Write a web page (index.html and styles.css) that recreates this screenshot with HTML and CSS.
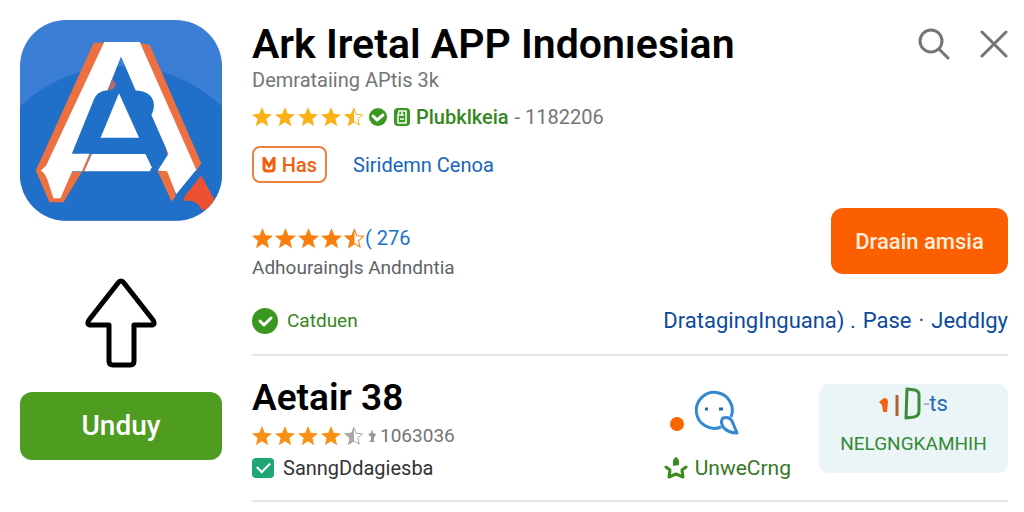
FILE: index.html
```html
<!DOCTYPE html>
<html lang="id">
<head>
<meta charset="UTF-8">
<meta name="viewport" content="width=device-width, initial-scale=1.0">
<title>Ark Iretal APP Indonıesian</title>
<link rel="stylesheet" href="styles.css">
</head>
<body>
<svg class="defs" width="0" height="0" aria-hidden="true">
<symbol id="star" viewBox="0 0 20 20">
<path d="M10 0l2.7 6.8 7.3.6-5.600 4.700L16.200 19.200 10 15.300 3.800 19.200l1.800-7.100L0 7.400l7.300-.6z"/>
</symbol>
<symbol id="star-half" viewBox="0 0 20 20">
<path d="M10 1.500l2.300 5.900 6.300.5-4.800 4.100 1.500 6.100L10 14.800l-5.300 3.300L6.200 12 1.400 7.900l6.300-.5z" fill="none" stroke="currentColor" stroke-width="1"/>
<path d="M10 0v15.300l-6.200 3.900 1.800-7.100L0 7.400l7.300-.6z"/>
</symbol>
</svg>
<div class="page">
<aside class="side">
<svg class="app-icon" viewBox="30 32 604 600" role="img" aria-label="Ark">
<defs>
<clipPath id="tile"><rect x="30" y="32" width="604" height="600" rx="138"/></clipPath>
</defs>
<g clip-path="url(#tile)">
<rect x="30" y="32" width="604" height="600" fill="#3a7ed6"/>
<circle cx="332" cy="610" r="440" fill="#2070c9"/>
<path d="M250 101L284 99 120 480 190 486 215 486 160 577H118L77 482z" fill="#ed7040"/>
<path d="M386 101L418 106 572 460 556 484 480 486 496 560 483 575 442 484 480 470z" fill="#ed7040"/>
<path d="M282 98H388L557 480 497 553 470 484 442 482 474 432 423 316C440 285 430 244 376 243L332 141 292 242C268 244 257 254 250 272L185 432H238L217 484H186L151 565H130L112 510C108 498 102 488 92 483L108 468z" fill="#fff"/>
<path d="M292 242L306 208 317 225 308 240z" fill="#b06a70"/>
<path d="M245 433H405L424 472 418 484H222z" fill="#fff"/>
<path d="M238 433L243 433 222 484 215 484z" fill="#ed7040"/>
<path d="M326 251L386 384H271z" fill="#fff"/>
<path d="M572 497L620 585 576 602C560 575 545 571 520 573 519 563 526 552 536 542z" fill="#ed5130"/>
</g>
</svg>
<svg class="arrow" viewBox="0 0 72 90" aria-hidden="true">
<path d="M33 5Q36 1 39 5L68 42Q71 47 66 47H49V83Q49 87 45 87H28Q24 87 24 83V47H6Q1 47 4 42z" fill="#fff" stroke="#000" stroke-width="5" stroke-linejoin="round"/>
</svg>
<button class="btn btn-green">Unduy</button>
</aside>

<main class="main">
<section class="app">
<div class="header">
<h1 class="title">Ark Iretal APP Indonıesian</h1>
<div class="tools">
<button class="icon-btn" aria-label="Cari">
<svg width="32" height="32" viewBox="0 0 32 32" fill="none" stroke="#757575" stroke-width="3" stroke-linecap="round">
<circle cx="13" cy="13" r="11"/>
<path d="M21 21l9 9"/>
</svg>
</button>
<button class="icon-btn" aria-label="Tutup">
<svg width="28" height="28" viewBox="0 0 28 28" fill="none" stroke="#757575" stroke-width="3" stroke-linecap="round">
<path d="M2 2l24 24M26 2L2 26"/>
</svg>
</button>
</div>
</div>
<p class="sub">Demrataiing APtis 3k</p>
<div class="rating">
<span class="stars gold">
<svg><use href="#star"/></svg><svg><use href="#star"/></svg><svg><use href="#star"/></svg><svg><use href="#star"/></svg><svg><use href="#star-half"/></svg>
</span>
<svg class="badge" viewBox="0 0 20 20" aria-hidden="true">
<circle cx="10" cy="10" r="9" fill="#3a971f"/>
<path d="M5 9l4 4 6-5" fill="none" stroke="#fff" stroke-width="3" stroke-linecap="round" stroke-linejoin="round"/>
</svg>
<svg class="badge" viewBox="0 0 20 20" aria-hidden="true">
<rect x="2" y="1" width="16" height="18" rx="4" fill="#3a971f"/>
<path d="M7 4h7v12H6V8zM7 8h5M8 12h4M10 5v3" fill="none" stroke="#fff" stroke-width="1.500"/>
</svg>
<span class="verified">Plubklkeia</span>
<span class="count">- 1182206</span>
</div>
<div class="tags">
<button class="tag">
<svg width="14" height="16" viewBox="0 0 14 16" aria-hidden="true"><path d="M2 1v10q0 3 3 3h4q3 0 3-3V1L7 9z" fill="none" stroke="#f0600f" stroke-width="3"/></svg>
Has
</button>
<a class="link" href="#">Siridemn Cenoa</a>
</div>
<div class="offer">
<div>
<div class="rating votes-row">
<span class="stars orange">
<svg><use href="#star"/></svg><svg><use href="#star"/></svg><svg><use href="#star"/></svg><svg><use href="#star"/></svg><svg><use href="#star-half"/></svg>
</span>
<a class="votes" href="#">( 276</a>
</div>
<p class="sub dark">Adhouraingls Andndntia</p>
</div>
<button class="btn btn-orange">Draain amsia</button>
</div>
<div class="status">
<span class="check-line">
<svg width="26" height="26" viewBox="0 0 26 26" aria-hidden="true">
<circle cx="13" cy="13" r="13" fill="#3a971f"/>
<path d="M8 13l4 4 7-7" fill="none" stroke="#fff" stroke-width="3" stroke-linecap="round" stroke-linejoin="round"/>
</svg>
Catduen
</span>
<nav class="links">
<a href="#">DratagingInguana) .</a>
<a href="#">Pase</a>
<span>·</span>
<a href="#">Jeddlgy</a>
</nav>
</div>
</section>

<section class="more">
<div class="info">
<h2 class="name">Aetair 38</h2>
<div class="rating">
<span class="stars amber">
<svg><use href="#star"/></svg><svg><use href="#star"/></svg><svg><use href="#star"/></svg><svg><use href="#star"/></svg><svg class="grey"><use href="#star-half"/></svg>
</span>
<svg class="mini" viewBox="0 0 8 14" aria-hidden="true"><path d="M4 0l1 4 3 1-2 4v3l1 1H1l2-2V8L0 5l3-1z" fill="#999"/></svg>
<span class="count small">1063036</span>
</div>
<label class="check-row">
<input class="check" type="checkbox" checked>
SanngDdagiesba
</label>
</div>
<div class="chat">
<div class="chat-icons">
<span class="dot"></span>
<svg width="46" height="46" viewBox="0 0 46 46" fill="none" stroke="#3288d2" stroke-width="3" aria-hidden="true">
<path d="M27 37A18 18 0 1 1 37 27"/>
<path d="M29 28Q35 26 38 31L43 43Q34 43 29 37 26 31 29 28z" stroke-linejoin="round"/>
<path d="M11 19h3M25 19h4" stroke="#2469b3"/>
</svg>
</div>
<a class="chat-link" href="#">
<svg width="24" height="24" viewBox="0 0 24 24" aria-hidden="true">
<path d="M9 9Q8 3 12 1q4 2 3 8l-6 1z" fill="#3a8c1f"/>
<path d="M2 11l4 3M22 11l-4 3M6 14l-1 7 7-3 7 3-1-7" fill="none" stroke="#3a8c1f" stroke-width="3" stroke-linecap="round" stroke-linejoin="round"/>
</svg>
UnweCrng
</a>
</div>
<div class="card">
<div class="logo">
<svg width="44" height="34" viewBox="0 0 44 34" fill="none" aria-hidden="true">
<path d="M0 15l5-4q4 0 4 4l-1 10H4l-1-7z" fill="#f26412"/>
<path d="M18 8v21" stroke="#a96233" stroke-width="3"/>
<path d="M28 2l8 1q4 1 4 5v16q0 5-5 6l-8 1z" stroke="#3a8c36" stroke-width="3" stroke-linejoin="round"/>
</svg>
<span class="logo-text"><span class="dash">-</span>ts</span>
</div>
<span class="card-label">NELGNGKAMHIH</span>
</div>
</section>
</main>
</div>
</body>
</html>
```

FILE: styles.css
```css
* {
    box-sizing: border-box;
}

body {
    margin: 0;
    background: #fff;
    color: #000;
    font-family: Roboto, "Liberation Sans", sans-serif;
    font-size: 20px;
    line-height: 24px;
}

h1,
h2,
p {
    margin: 0;
}

a {
    text-decoration: none;
}

button {
    font-family: inherit;
    cursor: pointer;
}

svg {
    display: block;
    flex: none;
}

.defs {
    position: absolute;
}

.page {
    display: grid;
    grid-template-columns: 202px 1fr;
    gap: 30px;
    padding: 20px 16px 8px 20px;
}

.side {
    display: flex;
    flex-direction: column;
    align-items: center;
}

.app-icon {
    width: 100%;
    margin-bottom: 57px;
}

.arrow {
    width: 72px;
    height: 90px;
    margin-bottom: 24px;
}

.btn {
    border: none;
    border-radius: 12px;
    color: #fff;
}

.btn-green {
    width: 100%;
    height: 68px;
    background: #4e9c20;
    font-size: 28px;
    font-weight: 500;
}

.btn-orange {
    width: 177px;
    height: 66px;
    background: #fb5f00;
    color: #ffeedb;
    font-size: 22px;
    font-weight: 500;
}

.app {
    padding-bottom: 20px;
    border-bottom: 2px solid #e3e5e8;
}

.header {
    display: flex;
    justify-content: space-between;
    align-items: center;
    height: 48px;
}

.title {
    font-size: 41px;
    font-weight: 600;
    line-height: 48px;
    white-space: nowrap;
}

.tools {
    display: flex;
    align-items: center;
    gap: 30px;
}

.icon-btn {
    padding: 0;
    border: none;
    background: none;
}

.sub {
    color: #757575;
}

.sub.dark {
    margin-top: 6px;
    color: #5f6368;
    font-size: 19px;
}

.rating {
    display: flex;
    align-items: center;
    gap: 4px;
    height: 24px;
}

.header + .sub + .rating {
    margin-top: 13px;
}

.stars {
    display: flex;
    gap: 3px;
}

.stars svg {
    width: 20px;
    height: 20px;
    fill: currentColor;
}

.gold {
    color: #fbb116;
}

.orange {
    gap: 2px;
    color: #fb7f0e;
}

.orange svg {
    width: 21px;
    height: 21px;
}

.amber {
    color: #fb9114;
}

.stars .grey {
    color: #a9a9a9;
}

.badge {
    width: 20px;
    height: 20px;
}

.verified {
    color: #36861f;
    font-weight: 500;
}

.count {
    color: #757575;
}

.verified + .count {
    margin-left: 2px;
}

.small {
    font-size: 19px;
}

.votes-row {
    gap: 0;
}

.votes {
    color: #1b73c8;
}

.tags {
    display: flex;
    align-items: center;
    gap: 26px;
    margin-top: 17px;
}

.tag {
    display: flex;
    align-items: center;
    justify-content: center;
    gap: 6px;
    width: 75px;
    height: 37px;
    padding: 0;
    border: 2px solid #ea813f;
    border-radius: 8px;
    background: #fff;
    color: #f0600f;
    font-size: 20px;
    font-weight: 500;
}

.link {
    color: #1765bb;
}

.offer {
    display: flex;
    justify-content: space-between;
    align-items: flex-end;
    margin-top: 25px;
}

.offer .sub {
    margin-bottom: -6px;
}

.status {
    display: flex;
    justify-content: space-between;
    align-items: center;
    margin-top: 34px;
}

.check-line {
    display: flex;
    align-items: center;
    gap: 9px;
    color: #36861f;
    font-size: 19px;
}

.links {
    display: flex;
    gap: 7px;
    color: #0c4a9c;
    font-size: 22px;
}

.links a {
    color: #0c4a9c;
}

.more {
    display: grid;
    grid-template-columns: 1fr auto 189px;
    align-items: center;
    gap: 28px;
    padding: 20px 0;
    border-bottom: 2px solid #e3e5e8;
}

.name {
    font-size: 37px;
    font-weight: 600;
    line-height: 44px;
}

.info .rating {
    margin: 4px 0 8px;
}

.mini {
    width: 8px;
    height: 14px;
}

.check-row {
    display: flex;
    align-items: center;
    gap: 9px;
    color: #333;
}

.check {
    appearance: none;
    display: grid;
    place-items: center;
    width: 22px;
    height: 20px;
    margin: 0;
    border-radius: 4px;
    background: #1fa675;
}

.check::before {
    content: "";
    width: 11px;
    height: 6px;
    margin-bottom: 4px;
    border-bottom: 2px solid #fff;
    border-left: 2px solid #fff;
    transform: rotate(-45deg);
}

.chat {
    align-self: end;
}

.chat-icons {
    display: flex;
    align-items: center;
    gap: 10px;
    margin: 0 0 20px 6px;
}

.chat-icons svg {
    overflow: visible;
}

.dot {
    width: 14px;
    height: 14px;
    margin-top: 22px;
    border-radius: 50%;
    background: #fb6500;
}

.chat-link {
    display: flex;
    align-items: center;
    gap: 7px;
    color: #35771f;
    font-size: 21px;
}

.card {
    display: flex;
    flex-direction: column;
    align-items: center;
    gap: 8px;
    height: 89px;
    border-radius: 10px;
    background: #ebf4f6;
}

.logo {
    display: flex;
    align-items: center;
    height: 40px;
}

.logo-text {
    color: #2869b8;
    font-size: 22px;
}

.dash {
    color: #8fb4c4;
}

.card-label {
    color: #348a35;
    font-size: 19px;
}
```
